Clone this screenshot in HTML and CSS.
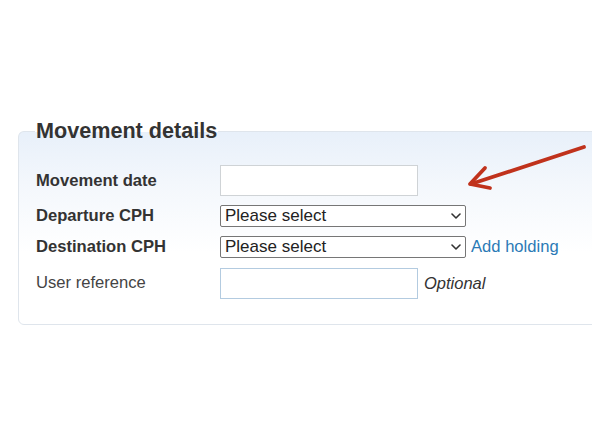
FILE: index.html
```html
<!DOCTYPE html>
<html lang="en">
<head>
<meta charset="utf-8">
<title>Movement details</title>
<link rel="stylesheet" href="styles.css">
</head>
<body>
<form class="page">
  <fieldset class="panel">
    <legend class="panel-title">Movement details</legend>
    <div class="form-grid">
      <label class="label strong" for="mdate">Movement date</label>
      <div class="control"><input id="mdate" class="text-input date-input" type="text"></div>

      <label class="label strong" for="dep">Departure CPH</label>
      <div class="control">
        <div class="select-wrap">
          <select id="dep" class="select"><option>Please select</option></select>
          <svg class="chevron" width="10" height="6" viewBox="0 0 10 6" aria-hidden="true"><path d="M1 1 L5 5 L9 1" fill="none" stroke="#333" stroke-width="1.6" stroke-linecap="round" stroke-linejoin="round"/></svg>
        </div>
      </div>

      <label class="label strong" for="dest">Destination CPH</label>
      <div class="control">
        <div class="select-wrap">
          <select id="dest" class="select"><option>Please select</option></select>
          <svg class="chevron" width="10" height="6" viewBox="0 0 10 6" aria-hidden="true"><path d="M1 1 L5 5 L9 1" fill="none" stroke="#333" stroke-width="1.6" stroke-linecap="round" stroke-linejoin="round"/></svg>
        </div>
        <a class="link" href="#">Add holding</a>
      </div>

      <label class="label" for="uref">User reference</label>
      <div class="control"><input id="uref" class="text-input ref-input" type="text"><span class="hint">Optional</span></div>
    </div>
  </fieldset>
</form>
<svg class="annotation" width="592" height="444" viewBox="0 0 592 444" aria-hidden="true">
  <g fill="none" stroke="#c0321c" stroke-width="3.8" stroke-linecap="round" stroke-linejoin="round">
    <path d="M584 147 L471 184"/>
    <path d="M485 168 L470 184 L490 188"/>
  </g>
</svg>
</body>
</html>
```
FILE: styles.css
```css
html, body {
  margin: 0;
  padding: 0;
  overflow: hidden;
  background: #ffffff;
}
body {
  width: 592px;
  height: 444px;
  position: relative;
  font-family: "Liberation Sans", Arial, sans-serif;
  color: #333333;
}
.page {
  box-sizing: border-box;
  width: 592px;
  padding-top: 119px;
  padding-left: 18px;
  overflow: hidden;
}
.panel {
  margin: 0;
  width: 600px;
  box-sizing: border-box;
  border: 1px solid #dfe5ec;
  border-radius: 6px;
  padding: 22px 0 25px 17px;
  background: linear-gradient(to bottom, #e8f0fa 0px, #f3f7fc 50px, #ffffff 120px);
}
.panel-title {
  padding: 0 1px;
  font-size: 21.6px;
  line-height: 24px;
  font-weight: bold;
  color: #333333;
  margin-left: -1px;
}
.form-grid {
  display: grid;
  grid-template-columns: 184px 1fr;
  row-gap: 9px;
  align-items: center;
}
.label {
  font-size: 16.6px;
  color: #444444;
}
.strong {
  font-weight: bold;
  color: #333333;
}
.control {
  display: flex;
  align-items: center;
}
.text-input {
  box-sizing: border-box;
  width: 198px;
  height: 31px;
  margin: 0;
  border: 1px solid #cfd3d6;
  background: #ffffff;
  font-family: inherit;
  font-size: 15px;
  padding: 2px 5px;
}
.ref-input {
  height: 31px;
  border-color: #b3cbe0;
  margin-top: 1px;
}
.select-wrap {
  position: relative;
  display: flex;
}
.select {
  -webkit-appearance: none;
  appearance: none;
  box-sizing: border-box;
  width: 246px;
  height: 22px;
  margin: 0;
  border: 1px solid #767676;
  border-radius: 2px;
  background: #ffffff;
  color: #222222;
  font-family: "Liberation Sans", Arial, sans-serif;
  font-size: 17px;
  line-height: 20px;
  padding: 0 20px 0 4px;
}
.chevron {
  position: absolute;
  right: 5px;
  top: 8px;
  pointer-events: none;
}
.link {
  margin-left: 5px;
  font-size: 16.6px;
  color: #2b7ab6;
  text-decoration: none;
}
.hint {
  margin-left: 6px;
  font-size: 16.5px;
  font-style: italic;
  color: #333333;
}
.annotation {
  position: absolute;
  left: 0;
  top: 0;
  pointer-events: none;
}
```
